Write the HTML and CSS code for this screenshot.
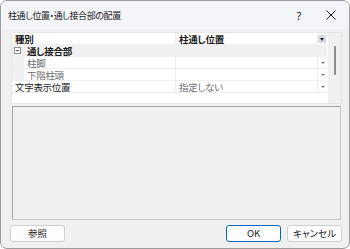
FILE: index.html
```html
<!DOCTYPE html>
<html lang="ja">
<head>
<meta charset="utf-8">
<link rel="stylesheet" href="styles.css">
</head>
<body>
<div class="win">
  <div class="titlebar">
    <span class="title">柱通し位置・通し接合部の配置</span>
    <span class="help">?</span>
    <span class="close"><svg width="10" height="10" viewBox="0 0 10 10"><path d="M0.5 0.5L9.5 9.5M9.5 0.5L0.5 9.5" stroke="#1a1a1a" stroke-width="1"/></svg></span>
  </div>
  <div class="content">
    <div class="gridwrap">
      <div class="grid">
        <div class="row head">
          <div class="name">種別</div>
          <div class="val bold">柱通し位置</div>
          <div class="drop btn"><span class="tri"></span></div>
        </div>
        <div class="row cat">
          <div class="name"><span class="exp"></span>通し接合部</div>
          <div class="val"></div>
          <div class="drop"></div>
        </div>
        <div class="row sub">
          <div class="indent"></div>
          <div class="name dis">柱脚</div>
          <div class="val"></div>
          <div class="drop"><span class="tri small"></span></div>
        </div>
        <div class="row sub">
          <div class="indent"></div>
          <div class="name dis">下階柱頭</div>
          <div class="val"></div>
          <div class="drop"><span class="tri small"></span></div>
        </div>
        <div class="row">
          <div class="name">文字表示位置</div>
          <div class="val dis">指定しない</div>
          <div class="drop"><span class="tri small"></span></div>
        </div>
        <div class="filler"></div>
      </div>
      <div class="vscroll"><div class="thumb"></div></div>
    </div>
    <div class="desc"></div>
    <div class="buttons">
      <button class="b">参照</button>
      <span class="spacer"></span>
      <button class="b ok">OK</button>
      <button class="b">キャンセル</button>
    </div>
  </div>
</div>
</body>
</html>
```
FILE: styles.css
```css
* { box-sizing: border-box; }
html, body { margin: 0; padding: 0; background: #ffffff; }
body {
  font-family: "Noto Sans CJK JP", "Noto Sans", sans-serif;
  font-size: 9.5px;
  color: #1a1a1a;
  font-feature-settings: "palt";
}
.win {
  width: 350px;
  height: 249px;
  border: 1px solid #9b9b9b;
  border-radius: 7px;
  background: #f0f0f0;
  overflow: hidden;
  display: flex;
  flex-direction: column;
}
.titlebar {
  height: 28px;
  background: #f3f5f9;
  display: flex;
  align-items: center;
  padding-left: 7px;
}
.title { font-size: 9px; flex: 1; letter-spacing: -0.4px; }
.help { width: 16px; text-align: center; font-size: 11px; font-family: "Noto Sans", sans-serif; margin-right: 16px; }
.close { width: 16px; display: flex; justify-content: center; margin-right: 10px; }
.content {
  flex: 1;
  padding: 3px 7px 0 10px;
  display: flex;
  flex-direction: column;
}
.gridwrap {
  height: 72px;
  display: flex;
  background: #ffffff;
  border: 1px solid #e6e6e6;
}
.grid {
  width: 316px;
  display: flex;
  flex-direction: column;
  background: #ffffff;
}
.row {
  height: 12px;
  display: flex;
  border-bottom: 1px solid #efefef;
  line-height: 12px;
  letter-spacing: -0.3px;
}
.name {
  width: 164px;
  padding-left: 3px;
  border-right: 1px solid #efefef;
  display: flex;
  align-items: center;
  white-space: nowrap;
}
.head .name, .bold { font-weight: bold; }
.head { border-bottom: 1px solid #f0f0f0; }
.val {
  flex: 1;
  padding-left: 3px;
  display: flex;
  align-items: center;
  white-space: nowrap;
  border-right: 1px solid #efefef;
}
.drop {
  width: 9px;
  display: flex;
  align-items: center;
  justify-content: center;
}
.drop.btn {
  background: #d6dbe6;
  width: 8px;
  height: 8px;
  margin: 2px 1px 0 0;
}
.tri {
  width: 0; height: 0;
  border-left: 2.5px solid transparent;
  border-right: 2.5px solid transparent;
  border-top: 3px solid #1a1a1a;
}
.tri.small { border-top-color: #777; border-left-width: 2px; border-right-width: 2px; border-top-width: 2px; }
.cat { background: #f0f0f0; border-bottom-color: #f0f0f0; }
.cat .name { padding-left: 2px; font-weight: bold; border-right: none; }
.cat .val { border-right: none; }
.exp {
  width: 7px; height: 7px;
  border: 1px solid #8f8f8f;
  margin-right: 6px;
  position: relative;
  background: #fff;
}
.exp::after {
  content: "";
  position: absolute;
  left: 1px; top: 2px;
  width: 3px; height: 1px;
  background: #555;
}
.indent { width: 12px; background: #f0f0f0; }
.sub .name { width: 152px; }
.dis { color: #6d6d6d; }
.filler { flex: 1; }
.vscroll {
  width: 13px;
  margin-left: 1px;
  background: #f0f0f0;
  display: flex;
  justify-content: center;
  padding-top: 13px;
}
.thumb { width: 2px; height: 29px; background: #8a8a8a; border-radius: 1px; }
.desc {
  height: 114px;
  margin: 2px 1px 0 1px;
  border: 1px solid #a5a5a5;
  border-right-color: #c8c8c8;
  border-bottom-color: #c8c8c8;
  background: #f0f0f0;
}
.buttons {
  display: flex;
  margin-top: 5px;
  margin-left: -1px;
  gap: 6px;
}
.spacer { flex: 1; }
.b {
  width: 55px;
  height: 17px;
  background: #fdfdfd;
  border: 1px solid #d0d0d0;
  border-radius: 3px;
  font-family: "Noto Sans CJK JP", "Noto Sans", sans-serif;
  font-feature-settings: "palt";
  font-size: 9.5px;
  color: #1a1a1a;
  padding: 0;
  line-height: 15px;
}
.ok { border: 1px solid #0067c0; }
```
